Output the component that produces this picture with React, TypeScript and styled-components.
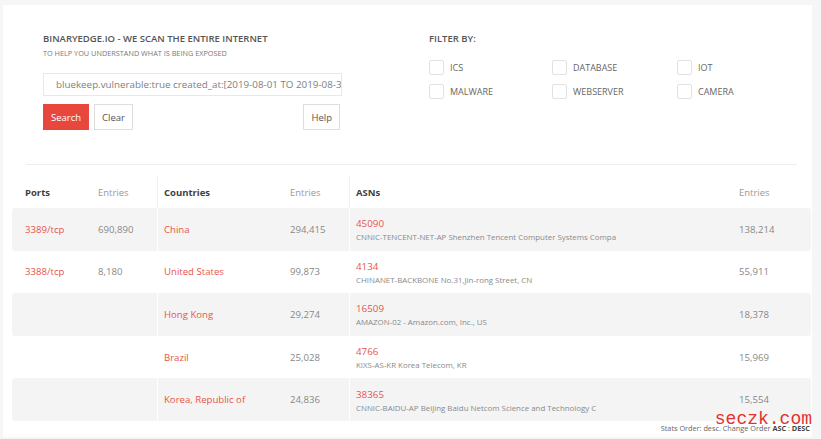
import React from "react";
import styled, { createGlobalStyle, css } from "styled-components";

const Global = createGlobalStyle`
  html, body { margin: 0; padding: 0; background: #f6f6f7; }
  body { font-family: "Open Sans", "Noto Sans", sans-serif; width: 821px; height: 439px; overflow: hidden; }
  * { box-sizing: border-box; }
`;

const Card = styled.div`
  position: relative;
  width: 809px;
  height: 432px;
  margin: 5px 0 0 3px;
  background: #ffffff;
  display: flex;
  flex-direction: column;
`;

const Top = styled.div`
  display: grid;
  grid-template-columns: 386px 1fr;
  padding: 27px 0 0 40px;
  height: 159px;
`;

const SearchCol = styled.div`
  display: flex;
  flex-direction: column;
  width: 299px;
`;

const Title = styled.div`
  font-size: 9.5px;
  font-weight: 600;
  color: #555;
  line-height: 13px;
  text-transform: uppercase;
`;

const Subtitle = styled.div`
  font-size: 7.3px;
  color: #777;
  line-height: 10px;
  margin-top: 3px;
`;

const Input = styled.div`
  margin-top: 15px;
  height: 23px;
  border: 1px solid #e8e8e8;
  padding: 0 0 0 12px;
  font-size: 9.8px;
  color: #808080;
  line-height: 21px;
  white-space: nowrap;
  overflow: hidden;
`;

const ButtonRow = styled.div`
  display: flex;
  gap: 5px;
  margin-top: 8px;
`;

const Button = styled.div<{ $primary?: boolean; $push?: boolean }>`
  height: 26px;
  padding: 0 7px;
  display: flex;
  align-items: center;
  font-size: 9.5px;
  border: 1px solid #dedede;
  background: #fff;
  color: #555;
  ${(p) => p.$primary && css`
    background: #e8473e;
    border-color: #e8473e;
    color: #fff;
  `}
  ${(p) => p.$push && css`
    margin-left: auto;
    margin-right: 2px;
  `}
`;

const FilterCol = styled.div`
  display: flex;
  flex-direction: column;
`;

const FilterGrid = styled.div`
  display: grid;
  grid-template-columns: 123px 125px 100px;
  row-gap: 9px;
  margin-top: 15px;
`;

const Check = styled.label`
  display: flex;
  align-items: center;
  gap: 6px;
  font-size: 9px;
  color: #666;
`;

const Box = styled.span`
  width: 15px;
  height: 15px;
  border: 1px solid #e2e2e2;
  border-radius: 2px;
  background: #fff;
`;

const Divider = styled.div`
  height: 1px;
  background: #ececf2;
  margin: 0 15px 0 23px;
`;

const Table = styled.div`
  margin: 11px 0 0 9px;
  width: 799px;
  display: flex;
  flex-direction: column;
`;

const Row = styled.div<{ $shade?: boolean; $head?: boolean }>`
  display: grid;
  grid-template-columns: 73px 72px 127px 65px 384px 78px;
  height: ${(p) => (p.$head ? "32px" : "42.6px")};
  background: ${(p) => (p.$shade ? "#f4f4f5" : "#fff")};
  border-radius: 3px;
`;

const Cell = styled.div<{ $sep?: boolean; $pad?: number; $head?: boolean }>`
  display: flex;
  flex-direction: column;
  justify-content: center;
  padding-left: ${(p) => p.$pad ?? 6}px;
  border-left: ${(p) => (p.$sep ? (p.$head ? "1px solid #f0f0f0" : "1px solid #ffffff") : "none")};
  min-width: 0;
`;

const HeadText = styled.span<{ $bold?: boolean }>`
  font-size: 9.5px;
  font-weight: ${(p) => (p.$bold ? 700 : 400)};
  color: ${(p) => (p.$bold ? "#3f3f3f" : "#9a9a9a")};
`;

const LinkText = styled.span`
  font-size: 9.6px;
  color: #e8554b;
  white-space: nowrap;
`;

const Num = styled.span`
  font-size: 9.6px;
  color: #888;
`;

const AsnNum = styled.span`
  font-size: 9.8px;
  color: #e8554b;
  line-height: 13px;
  margin-top: 2px;
`;

const AsnDesc = styled.span`
  font-size: 7.9px;
  color: #8a8a8a;
  line-height: 11px;
  margin-top: 2px;
  white-space: nowrap;
  overflow: hidden;
`;

const Footer = styled.div`
  text-align: right;
  font-size: 7.3px;
  color: #666;
  margin: 2px 2px 0 0;
  b { font-weight: 700; color: #444; }
`;

const Watermark = styled.div`
  position: absolute;
  right: 0;
  bottom: 8px;
  font-family: "Liberation Mono", "DejaVu Sans Mono", monospace;
  font-size: 18px;
  color: #e3322d;
  line-height: 20px;
`;

type R = { port?: string; pe?: string; country: string; ce: string; asn: string; desc: string; ae: string };

const rows: R[] = [
  { port: "3389/tcp", pe: "690,890", country: "China", ce: "294,415", asn: "45090", desc: "CNNIC-TENCENT-NET-AP Shenzhen Tencent Computer Systems Compa", ae: "138,214" },
  { port: "3388/tcp", pe: "8,180", country: "United States", ce: "99,873", asn: "4134", desc: "CHINANET-BACKBONE No.31,Jin-rong Street, CN", ae: "55,911" },
  { country: "Hong Kong", ce: "29,274", asn: "16509", desc: "AMAZON-02 - Amazon.com, Inc., US", ae: "18,378" },
  { country: "Brazil", ce: "25,028", asn: "4766", desc: "KIXS-AS-KR Korea Telecom, KR", ae: "15,969" },
  { country: "Korea, Republic of", ce: "24,836", asn: "38365", desc: "CNNIC-BAIDU-AP Beijing Baidu Netcom Science and Technology C", ae: "15,554" },
];

const filters = ["ICS", "DATABASE", "IOT", "MALWARE", "WEBSERVER", "CAMERA"];

export default function App() {
  return (
    <>
      <Global />
      <Card>
        <Top>
          <SearchCol>
            <Title>BinaryEdge.io - We scan the entire internet</Title>
            <Subtitle>TO HELP YOU UNDERSTAND WHAT IS BEING EXPOSED</Subtitle>
            <Input>bluekeep.vulnerable:true created_at:[2019-08-01 TO 2019-08-31]</Input>
            <ButtonRow>
              <Button $primary>Search</Button>
              <Button>Clear</Button>
              <Button $push>Help</Button>
            </ButtonRow>
          </SearchCol>
          <FilterCol>
            <Title>Filter by:</Title>
            <FilterGrid>
              {filters.map((f) => (
                <Check key={f}>
                  <Box />
                  {f}
                </Check>
              ))}
            </FilterGrid>
          </FilterCol>
        </Top>
        <Divider />
        <Table>
          <Row $head>
            <Cell $pad={13}><HeadText $bold>Ports</HeadText></Cell>
            <Cell $pad={13}><HeadText>Entries</HeadText></Cell>
            <Cell $sep $head><HeadText $bold>Countries</HeadText></Cell>
            <Cell><HeadText>Entries</HeadText></Cell>
            <Cell $sep $head><HeadText $bold>ASNs</HeadText></Cell>
            <Cell><HeadText>Entries</HeadText></Cell>
          </Row>
          {rows.map((r, i) => (
            <Row key={r.asn} $shade={i % 2 === 0}>
              <Cell $pad={13}>{r.port && <LinkText>{r.port}</LinkText>}</Cell>
              <Cell $pad={13}>{r.pe && <Num>{r.pe}</Num>}</Cell>
              <Cell $sep><LinkText>{r.country}</LinkText></Cell>
              <Cell><Num>{r.ce}</Num></Cell>
              <Cell $sep>
                <AsnNum>{r.asn}</AsnNum>
                <AsnDesc>{r.desc}</AsnDesc>
              </Cell>
              <Cell><Num>{r.ae}</Num></Cell>
            </Row>
          ))}
        </Table>
        <Footer>
          Stats Order: desc. Change Order <b>ASC</b> : <b>DESC</b>
        </Footer>
        <Watermark>seczk.com</Watermark>
      </Card>
    </>
  );
}
